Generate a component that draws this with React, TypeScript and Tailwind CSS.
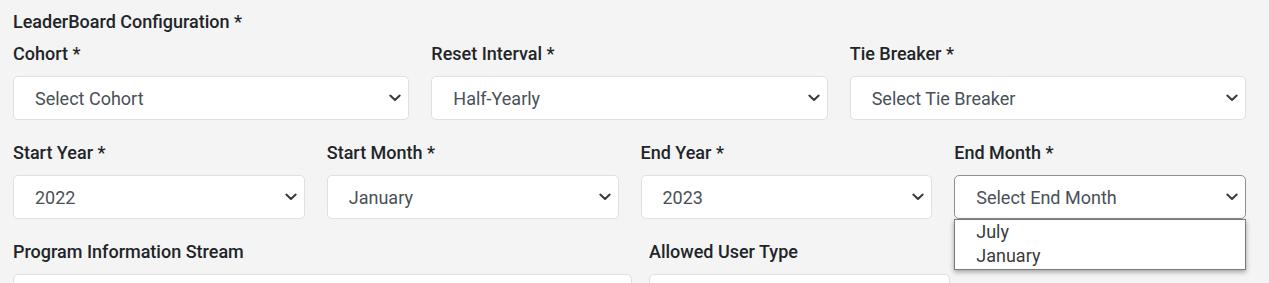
import React from 'react';

const Chevron = () => (
  <svg width="12" height="8" viewBox="0 0 12 8" className="shrink-0">
    <path d="M1.3 1.6 L6 6 L10.7 1.6" fill="none" stroke="#343a40" strokeWidth="2" strokeLinecap="round" strokeLinejoin="round" />
  </svg>
);

function Field({ label, value, open, width }: { label: string; value?: string; open?: boolean; width?: string }) {
  return (
    <div className={`relative flex flex-col ${width ?? ''}`}>
      <label className="text-[18px] leading-[24px] font-medium text-[#212529] mb-[10px]">{label}</label>
      {value !== undefined ? (
        <div
          className={`h-[44px] flex items-center justify-between pl-[21px] pr-[7px] bg-white rounded-[5px] border ${
            open ? 'border-[#8f8f8f]' : 'border-[#dde1e6]'
          }`}
        >
          <span className="text-[18px] text-[#495057]">{value}</span>
          <Chevron />
        </div>
      ) : (
        <div className="h-[44px] bg-white rounded-[5px] border border-[#dde1e6]" />
      )}
      {open && (
        <div className="absolute left-0 right-0 top-[78px] z-10 bg-white border border-[#7a7a7a] shadow-[0_2px_5px_rgba(0,0,0,0.35)] pb-[1px]">
          <div className="pl-[21px] text-[18px] leading-[24px] text-[#3a3a3a]">July</div>
          <div className="pl-[21px] text-[18px] leading-[24px] text-[#3a3a3a]">January</div>
        </div>
      )}
    </div>
  );
}

export default function App() {
  return (
    <div className="w-[1269px] h-[283px] overflow-hidden bg-[#f4f4f4] pl-[13px] pr-[23px] pt-[10px]" style={{ fontFamily: 'Roboto, "Liberation Sans", sans-serif' }}>
      <div className="text-[18px] leading-[24px] font-medium text-[#212529] mb-[8px]">LeaderBoard Configuration *</div>
      <div className="flex flex-col gap-[21px]">
        <div className="grid grid-cols-3 gap-[22px]">
          <Field label="Cohort *" value="Select Cohort" />
          <Field label="Reset Interval *" value="Half-Yearly" />
          <Field label="Tie Breaker *" value="Select Tie Breaker" />
        </div>
        <div className="grid grid-cols-4 gap-[22px]">
          <Field label="Start Year *" value="2022" />
          <Field label="Start Month *" value="January" />
          <Field label="End Year *" value="2023" />
          <Field label="End Month *" value="Select End Month" open />
        </div>
        <div className="flex gap-[17px]">
          <Field label="Program Information Stream" width="w-[619px]" />
          <Field label="Allowed User Type" width="w-[301px]" />
        </div>
      </div>
    </div>
  );
}
